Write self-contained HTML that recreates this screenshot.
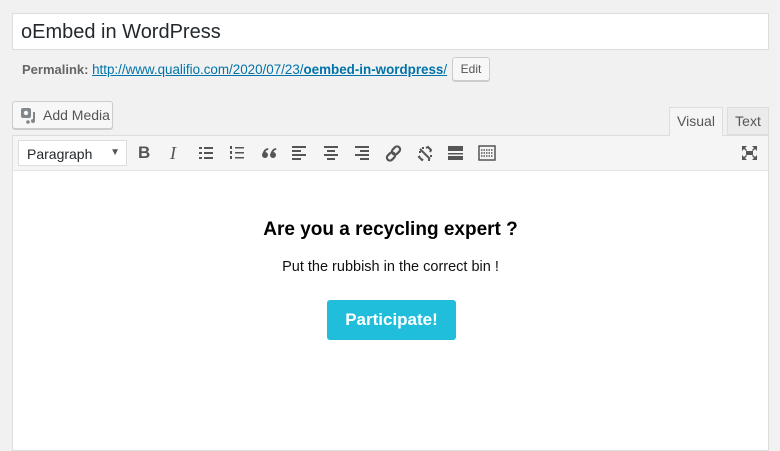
<!DOCTYPE html>
<html><head><meta charset="utf-8"><style>
*{box-sizing:border-box;margin:0;padding:0}
body{width:780px;height:431px;background:#f1f1f1;font-family:"Liberation Sans",sans-serif;position:relative;overflow:hidden;color:#23282d}
.abs{position:absolute}
.title{left:12px;top:13px;width:757px;height:37px;background:#fff;border:1px solid #ddd;font-size:20px;padding:7px 0 0 8px;color:#23282d}
.perma{left:22px;top:62px;font-size:13px;color:#666;font-weight:bold;white-space:nowrap}
.perma a{color:#0073aa;font-weight:normal;font-size:13.4px}
.perma a b{font-weight:bold}
.btn{background:#f7f7f7;border:1px solid #ccc;border-radius:3px;box-shadow:0 1px 0 #ccc;color:#555}
.tab{font-size:14px;color:#555;text-align:center;padding-top:6px}
.tb{left:12px;top:135px;width:757px;height:36px;background:#f5f5f5;border:1px solid #ddd;border-bottom:1px solid #e3e3e3}
.content{left:12px;top:171px;width:757px;height:280px;background:#fff;border:1px solid #ddd;border-top:none}
svg.ic{position:absolute;top:145px}
</style></head><body>
<div class="abs title">oEmbed in WordPress</div>
<div class="abs perma">Permalink: <a href="#">http://www.qualifio.com/2020/07/23/<b>oembed-in-wordpress</b>/</a></div>
<div class="abs btn" style="left:452px;top:57px;width:38px;height:24px;font-size:12px;text-align:center;line-height:22px">Edit</div>
<div class="abs btn" style="left:12px;top:101px;width:101px;height:28px;font-size:14px;line-height:26px;padding-left:30px">Add Media</div>
<svg class="abs" style="left:20px;top:107px" width="18" height="18" viewBox="0 0 18 18"><rect x="1" y="1" width="10" height="10" rx="2" fill="#82878c"/><circle cx="6" cy="6" r="2.2" fill="#f7f7f7"/><path d="M13 5h2v9a2 2 0 1 1-2-2z" fill="#82878c"/><circle cx="8" cy="15" r="1.8" fill="#82878c"/></svg>
<div class="abs tab" style="left:669px;top:107px;width:54px;height:29px;background:#f5f5f5;border:1px solid #ddd;border-bottom:none;z-index:2;padding-top:5px">Visual</div>
<div class="abs tab" style="left:727px;top:107px;width:42px;height:28px;background:#ebebeb;border:1px solid #ddd;padding-top:5px">Text</div>
<div class="abs tb"></div>
<div class="abs" style="left:18px;top:140px;width:109px;height:26px;background:#fff;border:1px solid #ddd;font-size:14px;color:#23282d;padding:5px 0 0 8px">Paragraph<span style="position:absolute;right:6px;top:6px;font-size:10px;color:#555">▼</span></div>
<div class="abs" style="left:138px;top:143px;font-size:17px;font-weight:bold;color:#555">B</div>
<div class="abs" style="left:170px;top:143px;font-size:18px;font-style:italic;font-family:'Liberation Serif',serif;color:#555">I</div>
<svg class="ic" style="left:198px" width="18" height="16"><g fill="#555"><rect x="1" y="2" width="3" height="2"/><rect x="1" y="7" width="3" height="2"/><rect x="1" y="12" width="3" height="2"/><rect x="6" y="2" width="9" height="2"/><rect x="6" y="7" width="9" height="2"/><rect x="6" y="12" width="9" height="2"/></g></svg>
<svg class="ic" style="left:229px" width="18" height="16"><g fill="#555"><rect x="1" y="1" width="2" height="3"/><rect x="1" y="6" width="2" height="3"/><rect x="1" y="11" width="2" height="3"/><rect x="6" y="2" width="9" height="1.5"/><rect x="6" y="7" width="9" height="1.5"/><rect x="6" y="12" width="9" height="1.5"/></g></svg>
<svg class="ic" style="left:261px" width="16" height="16"><g fill="#555"><circle cx="4" cy="10" r="3"/><path d="M1.5 9.5Q2 4 7 3l.5 1.5Q4 5.5 4 9z"/><circle cx="12" cy="10" r="3"/><path d="M9.5 9.5Q10 4 15 3l.5 1.5Q12 5.5 12 9z"/></g></svg>
<svg class="ic" style="left:291px" width="18" height="16"><g fill="#555"><rect x="1" y="1" width="14" height="2"/><rect x="1" y="5" width="9" height="2"/><rect x="1" y="9" width="14" height="2"/><rect x="1" y="13" width="9" height="2"/></g></svg>
<svg class="ic" style="left:322px" width="18" height="16"><g fill="#555"><rect x="2" y="1" width="14" height="2"/><rect x="5" y="5" width="8" height="2"/><rect x="2" y="9" width="14" height="2"/><rect x="5" y="13" width="8" height="2"/></g></svg>
<svg class="ic" style="left:353px" width="18" height="16"><g fill="#555"><rect x="2" y="1" width="14" height="2"/><rect x="7" y="5" width="9" height="2"/><rect x="2" y="9" width="14" height="2"/><rect x="7" y="13" width="9" height="2"/></g></svg>
<svg class="ic" style="left:385px" width="18" height="18"><g fill="none" stroke="#555" stroke-width="2.2"><rect x="8" y="1" width="6" height="9" rx="3" transform="rotate(45 11 5.5)"/><rect x="3" y="7" width="6" height="9" rx="3" transform="rotate(45 6 11.5)"/></g></svg>
<svg class="ic" style="left:416px" width="18" height="18"><g fill="none" stroke="#555" stroke-width="2"><path d="M10 3l2-1 3 3-1 2M7 14l-1 1-3-3 1-1M4 4l10 10M3 7h2M7 2v2M13 14v2M14 11h2"/></g></svg>
<svg class="ic" style="left:447px" width="18" height="16"><g fill="#555"><rect x="1" y="1" width="15" height="5"/><rect x="1" y="8" width="15" height="1.5"/><rect x="1" y="11" width="15" height="4"/></g></svg>
<svg class="ic" style="left:478px" width="18" height="16"><g fill="none" stroke="#555" stroke-width="1.5"><rect x="1" y="1" width="16" height="14"/><path d="M3 5h12M3 8h12M3 11h12" stroke-dasharray="1.5 1"/></g></svg>
<svg class="ic" style="left:741px" width="17" height="16"><g fill="#555"><rect x="5" y="6" width="7" height="4"/><path d="M1 1h5l-2 2 2 2-1 1-2-2-2 2zM16 1h-5l2 2-2 2 1 1 2-2 2 2zM1 15h5l-2-2 2-2-1-1-2 2-2-2zM16 15h-5l2-2-2-2 1-1 2 2 2-2z"/></g></svg>
<div class="abs content"></div>
<div class="abs" style="left:12px;top:219px;width:757px;text-align:center;font-size:19px;font-weight:bold;color:#000">Are you a recycling expert ?</div>
<div class="abs" style="left:12px;top:259px;width:757px;text-align:center;font-size:14.5px;color:#111">Put the rubbish in the correct bin !</div>
<div class="abs" style="left:327px;top:300px;width:129px;height:40px;background:#21bedc;border-radius:3px;color:#fff;font-weight:bold;font-size:17px;text-align:center;line-height:40px">Participate!</div>
</body></html>
